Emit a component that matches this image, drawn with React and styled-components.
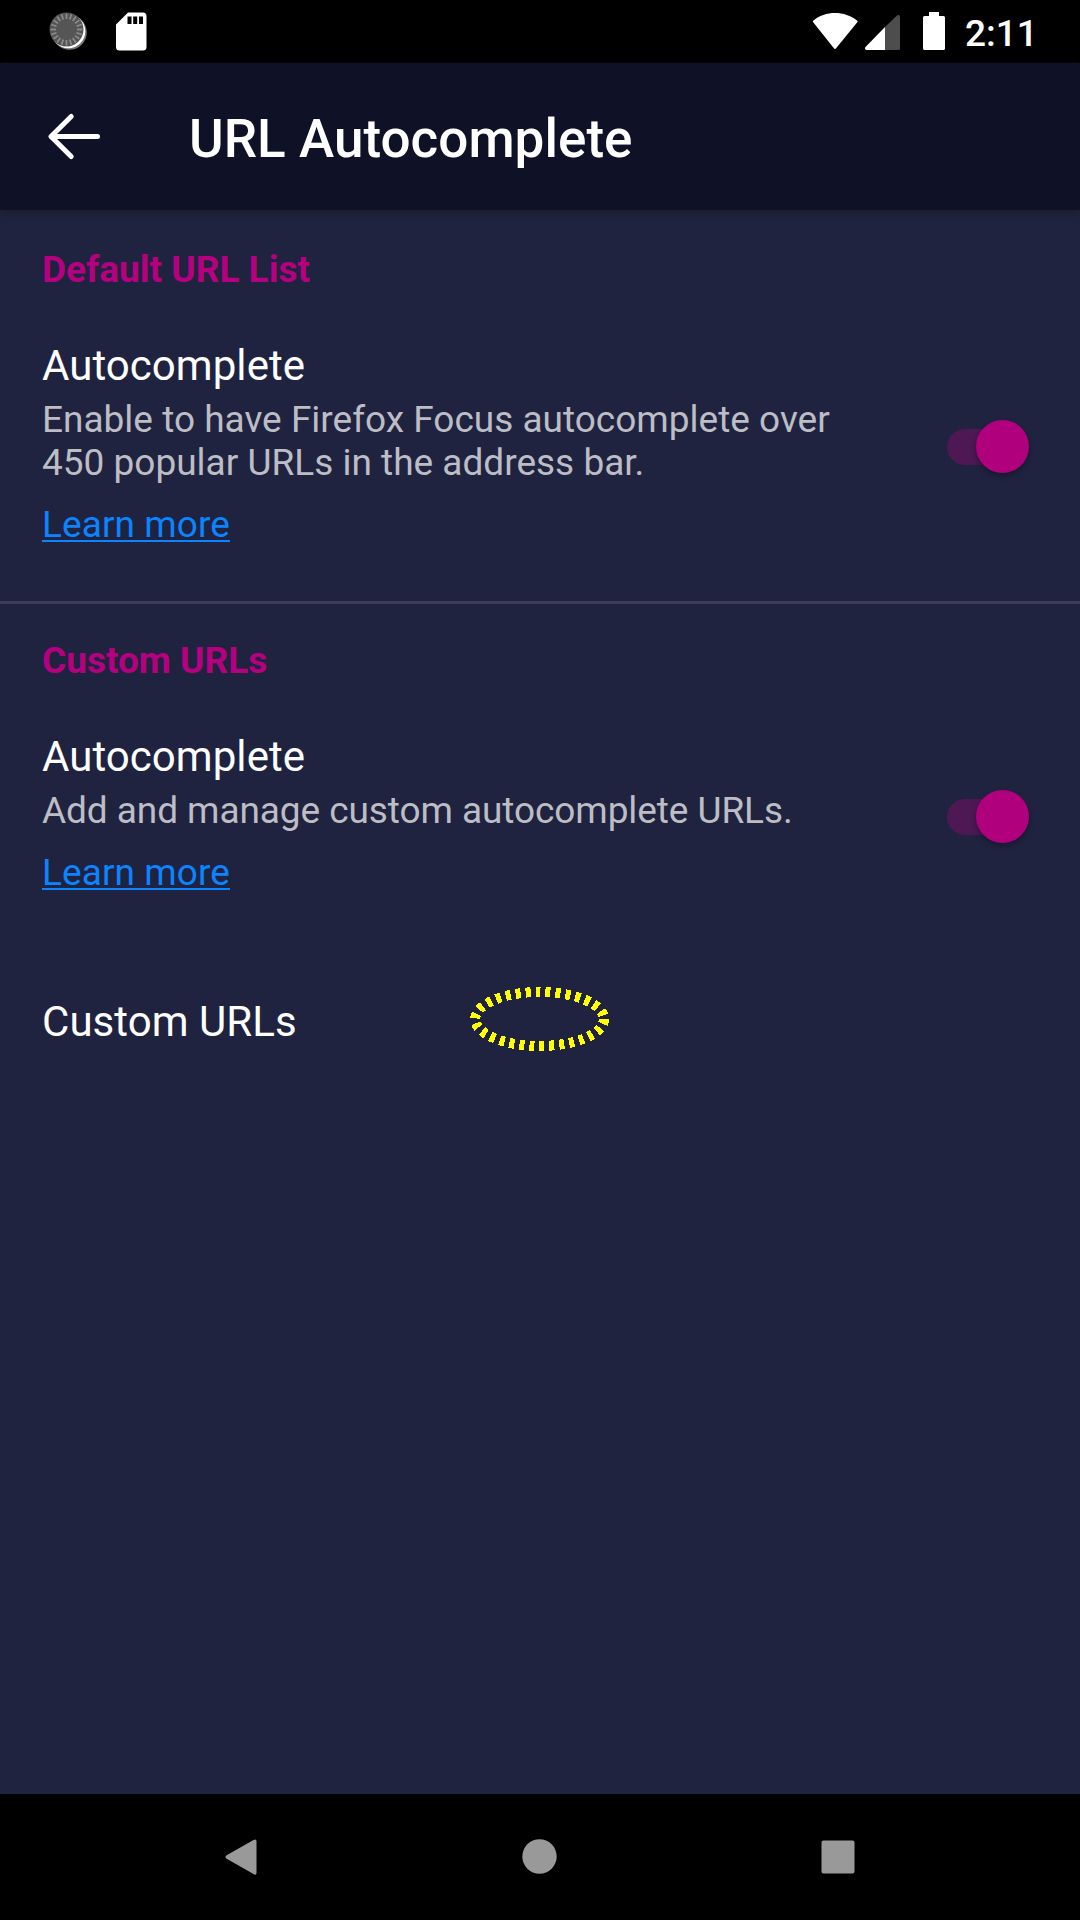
import React from "react";
import styled, { createGlobalStyle } from "styled-components";

const GlobalStyle = createGlobalStyle`
  * { box-sizing: border-box; }
  body { margin: 0; background: #20233f; overflow: hidden; }
`;

const Screen = styled.div`
  width: 1080px;
  height: 1920px;
  display: flex;
  flex-direction: column;
  background: #20233f;
  color: #fff;
  font-family: Roboto, "Noto Sans", sans-serif;
`;

const StatusBar = styled.header`
  height: 63px;
  flex: none;
  display: flex;
  justify-content: space-between;
  background: #000;
`;

const StatusGroup = styled.div`
  display: flex;
  align-items: flex-start;
`;

const Clock = styled.time`
  width: 115px;
  padding-top: 12px;
  font-size: 37px;
  line-height: 43px;
  font-weight: 500;
`;

const AppBar = styled.div`
  height: 147px;
  flex: none;
  display: flex;
  align-items: flex-start;
  background: #0f1126;
  box-shadow: 0 2px 8px rgba(24, 24, 36, 0.8);
`;

const BackButton = styled.button`
  width: 189px;
  height: 147px;
  padding: 0;
  border: 0;
  background: none;
  display: block;
`;

const Title = styled.h1`
  margin: 0;
  padding-top: 45px;
  font-size: 53px;
  line-height: 62px;
  font-weight: 500;
  letter-spacing: 0.04px;
`;

const Content = styled.main`
  flex: 1;
`;

const Section = styled.section`
  padding: ${(p) => p.$top}px 42px 0;
  height: ${(p) => p.$height}px;
  border-bottom: ${(p) => (p.$divided ? "3px solid #3c3e56" : "0")};
`;

const SectionTitle = styled.h2`
  margin: 0;
  font-size: 37px;
  line-height: 43px;
  font-weight: 700;
  color: #b5007f;
`;

const Preference = styled.div`
  display: flex;
  justify-content: space-between;
  align-items: center;
  padding-top: 50px;
`;

const PreferenceText = styled.div`
  width: 820px;
  padding-bottom: ${(p) => p.$bottom}px;
`;

const PreferenceTitle = styled.div`
  font-size: 42px;
  line-height: 49px;
  letter-spacing: 0.05px;
`;

const Summary = styled.p`
  margin: 8px 0 0;
  font-size: 37px;
  line-height: 43px;
  letter-spacing: ${(p) => p.$tracking}px;
  color: #bcbdc5;
`;

const LearnMore = styled.a`
  display: block;
  width: fit-content;
  margin-top: 19px;
  font-size: 37px;
  line-height: 43px;
  letter-spacing: 0.08px;
  color: #0a84ff;
  text-decoration: underline;
  text-decoration-thickness: 2px;
  text-underline-offset: 3px;
  text-decoration-skip-ink: none;
`;

const Track = styled.span`
  width: 82px;
  height: 36px;
  flex: none;
  margin-right: 9px;
  display: flex;
  align-items: center;
  justify-content: flex-end;
  border-radius: 18px;
  background: #4e1854;
`;

const Thumb = styled.span`
  width: 53px;
  height: 53px;
  flex: none;
  margin-bottom: 1px;
  border-radius: 50%;
  background: #b1007e;
  box-shadow: 0 3px 5px rgba(16, 16, 32, 0.55);
`;

const LinkRow = styled.div`
  display: flex;
  align-items: center;
  height: 147px;
  padding-left: 42px;
`;

const RowLabel = styled.span`
  width: 428px;
  font-size: 42px;
  line-height: 49px;
  letter-spacing: 0.05px;
`;

const NavBar = styled.nav`
  height: 126px;
  flex: none;
  display: flex;
  padding-left: 92px;
  background: #000;
`;

const NavButton = styled.button`
  width: 298px;
  height: 126px;
  padding: 0;
  border: 0;
  background: none;
  display: flex;
  justify-content: center;
`;

const Icon = styled.svg`
  display: block;
  flex: none;
`;

const FocusRing = styled(Icon)`
  margin-bottom: 5px;
`;

const TICKS = Array.from({ length: 20 }, (_, i) => i * 18);

function Switch() {
  return (
    <Track role="switch" aria-checked="true">
      <Thumb />
    </Track>
  );
}

function SettingRow({ summary, bottom, tracking = 0 }) {
  return (
    <Preference>
      <PreferenceText $bottom={bottom}>
        <PreferenceTitle>Autocomplete</PreferenceTitle>
        <Summary $tracking={tracking}>{summary}</Summary>
        <LearnMore>Learn more</LearnMore>
      </PreferenceText>
      <Switch />
    </Preference>
  );
}

export default function App() {
  return (
    <Screen>
      <GlobalStyle />
      <StatusBar>
        <StatusGroup>
          <Icon width="170" height="63" viewBox="0 0 170 63">
            <circle cx="69.5" cy="32.5" r="17.3" fill="#777" />
            <circle cx="68.3" cy="31.3" r="17" fill="#fff" />
            <circle cx="66.5" cy="29.5" r="17" fill="#555" />
            <g stroke="#8c8c8c" strokeWidth="1.7">
              {TICKS.map((a) => (
                <path key={a} d="M66.5 13.5v5.5" transform={`rotate(${a} 66.5 29.5)`} />
              ))}
            </g>
            <path
              fillRule="evenodd"
              fill="#fff"
              d="M128 12.5h15a3.5 3.5 0 0 1 3.5 3.5v31a3.5 3.5 0 0 1-3.5 3.5h-23.500a3.500 3.500 0 0 1-3.500-3.500V24.500zM127.500 16.500v7.500h4v-7.500zM133.200 16.500v7.500h4v-7.500zM139 16.500v7.500h4v-7.500z"
            />
          </Icon>
        </StatusGroup>
        <StatusGroup>
          <Icon width="165" height="63" viewBox="800 0 165 63">
            <path
              fill="#fff"
              d="M813.200 22.300Q812.400 21.400 813.500 20.600C819 15.500 827 13 835 13s16 2.500 22 7.600q1.100.8.300 1.700L836.300 48q-1.300 1.800-2.600 0z"
            />
            <path fill="#fff" d="M885 27v23h-18.500q-2.500-.8-1-3z" />
            <path fill="#4d4d4d" d="M885 27l12-11.500q3-1.500 3 1.500v31.500q0 1.500-1.500 1.500H885z" />
            <path
              fill="#fff"
              d="M929 12h10v4h4.500q1.500 0 1.500 1.500v31q0 1.500-1.500 1.500h-19q-1.500 0-1.500-1.500v-31q0-1.500 1.500-1.500h4.500z"
            />
          </Icon>
          <Clock>2:11</Clock>
        </StatusGroup>
      </StatusBar>
      <AppBar>
        <BackButton aria-label="Back">
          <Icon width="189" height="147" viewBox="0 63 189 147">
            <path
              d="M71.200 116.500L51 136.500l20.200 20M51 136.500h46.500"
              fill="none"
              stroke="#fff"
              strokeWidth="5"
              strokeLinecap="round"
              strokeLinejoin="round"
            />
          </Icon>
        </BackButton>
        <Title>URL Autocomplete</Title>
      </AppBar>
      <Content>
        <Section $top={38} $height={394} $divided>
          <SectionTitle>Default URL List</SectionTitle>
          <SettingRow
            bottom={7}
            summary={<>Enable to have Firefox Focus autocomplete over<br />450 popular URLs in the address bar.</>}
          />
        </Section>
        <Section $top={35} $height={344}>
          <SectionTitle>Custom URLs</SectionTitle>
          <SettingRow bottom={8} tracking={-0.08} summary="Add and manage custom autocomplete URLs." />
        </Section>
        <LinkRow>
          <RowLabel>Custom URLs</RowLabel>
          <FocusRing width="140" height="66" viewBox="470 986 140 66">
            <ellipse
              cx="539.600"
              cy="1019"
              rx="64.400"
              ry="27"
              fill="none"
              stroke="#ff0"
              strokeWidth="10"
              strokeDasharray="5 5"
              shapeRendering="crispEdges"
            />
          </FocusRing>
        </LinkRow>
      </Content>
      <NavBar>
        <NavButton aria-label="Back">
          <Icon width="120" height="126" viewBox="181 1794 120 126">
            <path
              d="M253.500 1840q3-1.500 3 1.500v31q0 3.500-3 1.500L226.200 1858.500q-1.500-1.500 0-3z"
              fill="#999"
            />
          </Icon>
        </NavButton>
        <NavButton aria-label="Home">
          <Icon width="120" height="126" viewBox="479 1794 120 126">
            <circle cx="539.500" cy="1856.500" r="17.200" fill="#999" />
          </Icon>
        </NavButton>
        <NavButton aria-label="Overview">
          <Icon width="120" height="126" viewBox="777 1794 120 126">
            <rect x="821.500" y="1840.500" width="33" height="33" rx="2" fill="#999" />
          </Icon>
        </NavButton>
      </NavBar>
    </Screen>
  );
}
